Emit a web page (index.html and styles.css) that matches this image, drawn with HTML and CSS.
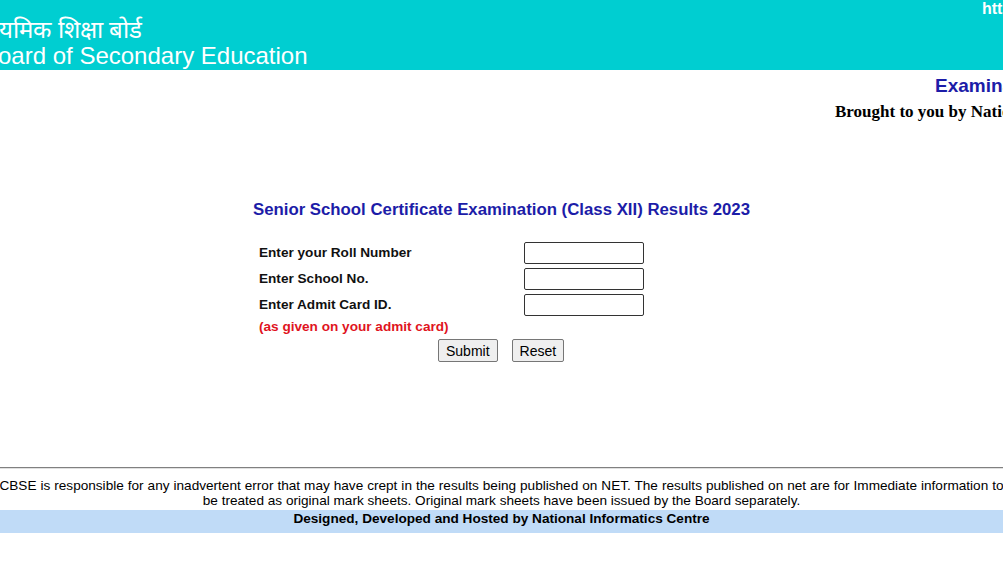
FILE: index.html
```html
<!DOCTYPE html>
<html lang="en">
<head>
<meta charset="utf-8">
<title>CBSE Results 2023</title>
<link rel="stylesheet" href="styles.css">
</head>
<body>
<header class="masthead">
  <div class="brand">
    <div class="brand-hi">यमिक शिक्षा बोर्ड</div>
    <div class="brand-en">oard of Secondary Education</div>
  </div>
  <div class="site-link">https://cbseresults.nic.in</div>
</header>

<div class="subhead">
  <div class="exam-title">Examination Results 2023</div>
  <div class="brought">Brought to you by National Informatics Centre</div>
</div>

<main class="result-form">
  <h1 class="form-title">Senior School Certificate Examination (Class XII) Results 2023</h1>
  <form class="form-grid">
    <label class="field-label" for="roll">Enter your Roll Number</label>
    <input class="field-input" id="roll" type="text">
    <label class="field-label" for="school">Enter School No.</label>
    <input class="field-input" id="school" type="text">
    <label class="field-label" for="admit">Enter Admit Card ID.</label>
    <input class="field-input" id="admit" type="text">
    <div class="field-note">(as given on your admit card)</div>
    <div class="buttons">
      <button type="submit" class="btn">Submit</button>
      <button type="reset" class="btn">Reset</button>
    </div>
  </form>
</main>

<footer class="footer">
  <hr class="rule">
  <p class="disclaimer"><span class="line1">CBSE is responsible for any inadvertent error that may have crept in the results being published on NET. The results published on net are for Immediate information to</span><br>be treated as original mark sheets. Original mark sheets have been issued by the Board separately.</p>
  <div class="credit">Designed, Developed and Hosted by National Informatics Centre</div>
</footer>
</body>
</html>
```

FILE: styles.css
```css
html, body {
  margin: 0;
  padding: 0;
  background: #ffffff;
  overflow: hidden;
  width: 1003px;
  height: 564px;
  font-family: "Liberation Sans", Arial, sans-serif;
}

.masthead {
  display: flex;
  height: 70px;
  background: #00ced1;
  color: #ffffff;
}

.brand {
  flex: 1;
  padding-top: 17px;
}

.brand-hi {
  font-size: 24px;
  line-height: 25px;
  margin-left: -1px;
}

.brand-en {
  font-size: 24px;
  line-height: 28px;
  margin-left: -2px;
}

.site-link {
  width: 21px;
  white-space: nowrap;
  font-weight: bold;
  font-size: 16px;
  line-height: 18px;
}

.subhead {
  overflow: hidden;
  white-space: nowrap;
}

.exam-title {
  padding-left: 935px;
  padding-top: 4px;
  font-size: 19px;
  line-height: 24px;
  font-weight: bold;
  color: #1c1ca8;
}

.brought {
  padding-left: 835px;
  font-family: "Liberation Serif", "Times New Roman", serif;
  font-weight: bold;
  font-size: 17px;
  line-height: 28px;
  color: #000000;
}

.result-form {
  display: flex;
  flex-direction: column;
  align-items: center;
  padding-top: 74px;
}

.form-title {
  margin: 0;
  font-size: 16.8px;
  line-height: 20px;
  font-weight: bold;
  color: #1c1ca8;
}

.form-grid {
  display: grid;
  grid-template-columns: 265px 120px;
  row-gap: 4px;
  width: 385px;
  margin-top: 22px;
  align-self: flex-start;
  margin-left: 259px;
}

.field-label {
  font-size: 13.6px;
  font-weight: bold;
  color: #111111;
  line-height: 22px;
}

.field-input {
  box-sizing: border-box;
  width: 120px;
  height: 22px;
  margin: 0;
  border: 1px solid #333333;
  border-radius: 2px;
  padding: 0 3px;
}

.field-note {
  grid-column: 1 / 3;
  font-size: 13.6px;
  font-weight: bold;
  color: #e0141e;
  line-height: 18px;
  margin-top: -2px;
}

.buttons {
  grid-column: 1 / 3;
  display: flex;
  gap: 14px;
  padding-left: 179px;
  margin-top: -1px;
}

.btn {
  font-family: "Liberation Sans", Arial, sans-serif;
  font-size: 14px;
  height: 23px;
  padding: 0 7px;
  background: #efefef;
  border: 1px solid #767676;
  border-radius: 2px;
  color: #000000;
}

.footer {
  margin-top: 105px;
}

.rule {
  margin: 0;
  border: 0;
  border-top: 1px solid #808080;
  border-bottom: 1px solid #e0e0e0;
  height: 0;
}

.disclaimer {
  margin: 9px 0 0;
  text-align: center;
  font-size: 13.6px;
  line-height: 15px;
  color: #000000;
  white-space: nowrap;
}

.line1 {
  display: inline-block;
  margin: 0 -200px;
  word-spacing: 0.2px;
}

.credit {
  margin-top: 2px;
  background: #c0dbf7;
  height: 23px;
  text-align: center;
  font-size: 13.6px;
  font-weight: bold;
  line-height: 17px;
  color: #000000;
}
```
